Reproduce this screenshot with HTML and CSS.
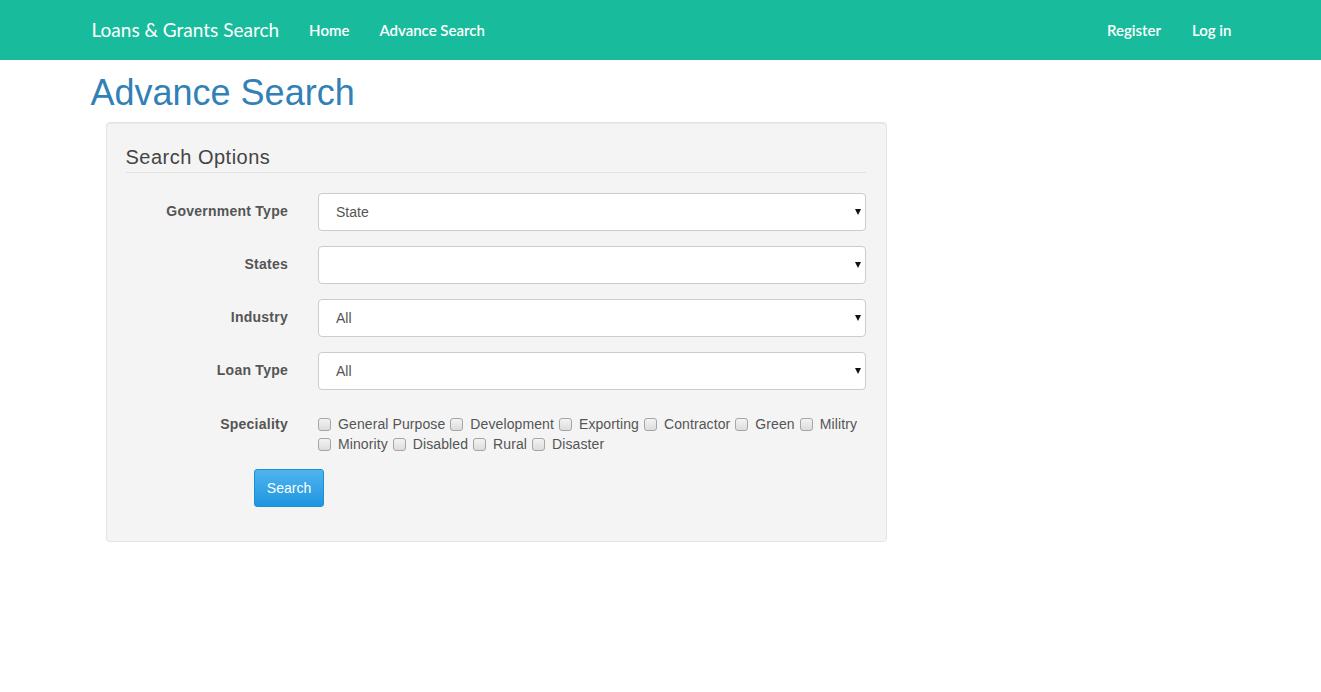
FILE: index.html
```html
<!DOCTYPE html>
<html lang="en">
<head>
<meta charset="utf-8">
<title>Advance Search</title>
<link rel="stylesheet" href="styles.css">
</head>
<body>
<nav class="navbar">
  <div class="container nav-inner">
    <a class="brand" href="#">Loans &amp; Grants Search</a>
    <ul class="nav-links">
      <li><a href="#">Home</a></li>
      <li><a href="#">Advance Search</a></li>
    </ul>
    <ul class="nav-links nav-right">
      <li><a href="#">Register</a></li>
      <li><a href="#">Log in</a></li>
    </ul>
  </div>
</nav>
<main class="container">
  <h1 class="page-title">Advance Search</h1>
  <div class="well">
    <form class="form">
      <div class="legend">Search Options</div>
      <div class="form-row">
        <label class="form-label">Government Type</label>
        <div class="form-field select-wrap">
          <select class="form-select"><option>State</option></select>
        </div>
      </div>
      <div class="form-row">
        <label class="form-label">States</label>
        <div class="form-field select-wrap">
          <select class="form-select"><option></option></select>
        </div>
      </div>
      <div class="form-row">
        <label class="form-label">Industry</label>
        <div class="form-field select-wrap">
          <select class="form-select"><option>All</option></select>
        </div>
      </div>
      <div class="form-row">
        <label class="form-label">Loan Type</label>
        <div class="form-field select-wrap">
          <select class="form-select"><option>All</option></select>
        </div>
      </div>
      <div class="form-row row-top">
        <label class="form-label label-top">Speciality</label>
        <div class="form-field checks"><span class="check"><input type="checkbox"><span>General Purpose</span></span><span class="check"><input type="checkbox"><span>Development</span></span><span class="check"><input type="checkbox"><span>Exporting</span></span><span class="check"><input type="checkbox"><span>Contractor</span></span><span class="check"><input type="checkbox"><span>Green</span></span><span class="check"><input type="checkbox"><span>Militry</span></span><span class="check"><input type="checkbox"><span>Minority</span></span><span class="check"><input type="checkbox"><span>Disabled</span></span><span class="check"><input type="checkbox"><span>Rural</span></span><span class="check"><input type="checkbox"><span>Disaster</span></span></div>
      </div>
      <div class="button-row">
        <button type="button" class="btn">Search</button>
      </div>
    </form>
  </div>
</main>
</body>
</html>
```
FILE: styles.css
```css
* { box-sizing: border-box; }
html, body { margin: 0; padding: 0; }
body {
  font-family: "Liberation Sans", Arial, sans-serif;
  font-size: 14px;
  line-height: 1.42857;
  color: #333;
  background: #fff;
}
.container {
  width: 1170px;
  margin: 0 auto;
  padding: 0 15px;
}
.navbar {
  background: #18bc9c;
  height: 60px;
}
.nav-inner {
  display: flex;
  align-items: center;
  height: 60px;
}
.brand {
  font-family: Lato, "Liberation Sans", sans-serif;
  font-size: 19px;
  color: #fff;
  text-decoration: none;
  padding: 0 15px 0 1px;
  line-height: 60px;
}
.nav-links {
  list-style: none;
  margin: 0;
  padding: 0;
  display: flex;
}
.nav-links a {
  display: block;
  font-family: Lato, "Liberation Sans", sans-serif;
  font-size: 15px;
  font-weight: 600;
  color: #fff;
  text-decoration: none;
  padding: 0 15px;
  line-height: 60px;
}
.nav-right {
  margin-left: auto;
  margin-right: -16px;
}
.nav-right li + li a { padding-left: 16px; }
.page-title {
  font-family: "Liberation Sans", Arial, sans-serif;
  font-weight: 400;
  font-size: 36px;
  color: #3181b7;
  margin: 13px 0 9px 0;
  line-height: 40px;
}
.well {
  width: 781px;
  margin-left: 15px;
  background: #f4f4f4;
  border: 1px solid #e3e3e3;
  border-radius: 4px;
  box-shadow: inset 0 1px 1px rgba(0,0,0,.05);
  padding: 19px 20px 19px 19px;
}
.legend {
  font-size: 20px;
  letter-spacing: 0.5px;
  line-height: 30px;
  color: #444;
  border-bottom: 1px solid #e2e2e2;
  margin-bottom: 20px;
}
.form-row {
  display: flex;
  align-items: center;
  margin: 0 -15px 15px;
}
.row-top { align-items: flex-start; }
.form-label {
  width: 25%;
  padding: 0 15px;
  text-align: right;
  font-weight: 700;
  letter-spacing: 0.25px;
  color: #555;
}
.label-top { padding-top: 10px; }
.form-field {
  width: 75%;
  padding: 0 15px;
}
.select-wrap { position: relative; }
.select-wrap::after {
  content: "";
  position: absolute;
  right: 20px;
  top: 16px;
  border-left: 3.5px solid transparent;
  border-right: 3.5px solid transparent;
  border-top: 6px solid #111;
  pointer-events: none;
}
.form-select {
  display: block;
  width: 100%;
  height: 38px;
  appearance: none;
  -webkit-appearance: none;
  background: #fff;
  border: 1px solid #ccc;
  border-radius: 4px;
  padding: 0 30px 0 17px;
  font-family: "Liberation Sans", Arial, sans-serif;
  font-size: 14px;
  color: #555;
}
.checks {
  display: flex;
  flex-wrap: wrap;
  color: #555;
  line-height: 20px;
  padding-top: 9px;
  letter-spacing: 0.1px;
}
.check {
  display: inline-flex;
  align-items: center;
  white-space: nowrap;
}
.check input {
  appearance: none;
  -webkit-appearance: none;
  width: 13px;
  height: 13px;
  margin: 0 7px 0 0;
  border: 1px solid #a5a5a5;
  border-radius: 3px;
  background: linear-gradient(#f3f3f3, #dcdcdc);
}
.check span { margin-right: 5px; }
.button-row {
  margin: 0 -15px 15px;
  padding-left: calc((100% + 30px) / 6 + 15px);
}
.btn {
  height: 38px;
  padding: 0 12px;
  font-family: "Liberation Sans", Arial, sans-serif;
  font-size: 14px;
  color: #fff;
  background: linear-gradient(#4fb4ee, #1e96e0);
  border: 1px solid #1b8fd6;
  border-radius: 3px;
}
```
